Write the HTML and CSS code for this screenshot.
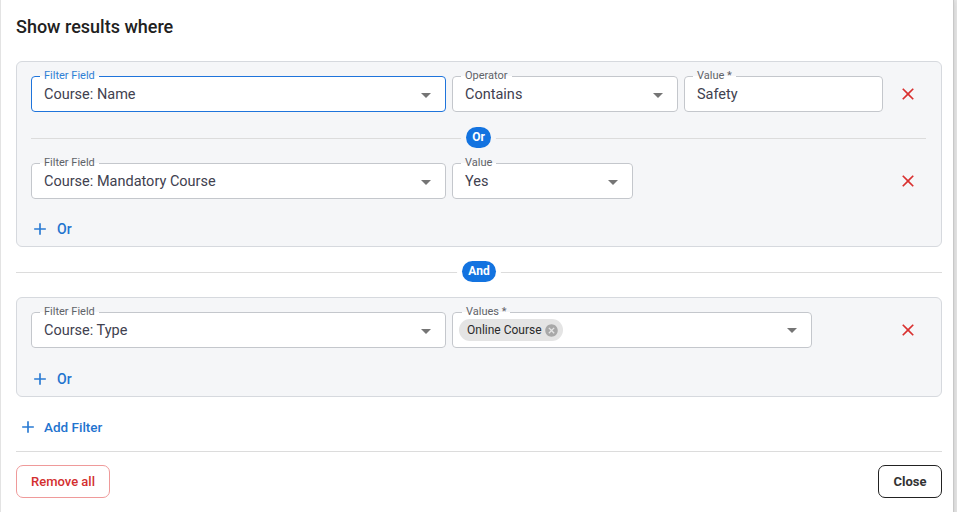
FILE: index.html
```html
<!DOCTYPE html>
<html lang="en">

<head>
    <meta charset="UTF-8">
    <meta name="viewport" content="width=device-width, initial-scale=1.0">
    <title>Show results where</title>
    <link rel="stylesheet" href="styles.css">
</head>

<body>
    <div class="dialog">
        <h2 class="title">Show results where</h2>

        <div class="group">
            <div class="row">
                <fieldset class="field focused w-field">
                    <legend>Filter Field</legend>
                    <div class="field-body">
                        <span class="val">Course: Name</span>
                        <svg class="arrow" viewBox="0 0 24 24"><path d="M7 10l5 5 5-5z" /></svg>
                    </div>
                </fieldset>
                <fieldset class="field w-op">
                    <legend>Operator</legend>
                    <div class="field-body">
                        <span class="val">Contains</span>
                        <svg class="arrow" viewBox="0 0 24 24"><path d="M7 10l5 5 5-5z" /></svg>
                    </div>
                </fieldset>
                <fieldset class="field w-value">
                    <legend>Value *</legend>
                    <div class="field-body">
                        <span class="val">Safety</span>
                    </div>
                </fieldset>
                <button class="remove">
                    <svg viewBox="0 0 24 24"><path d="M19 6.41 17.59 5 12 10.59 6.41 5 5 6.41 10.59 12 5 17.59 6.41 19 12 13.41 17.59 19 19 17.59 13.41 12z" /></svg>
                </button>
            </div>

            <div class="divider inner"><span class="pill">Or</span></div>

            <div class="row">
                <fieldset class="field w-field">
                    <legend>Filter Field</legend>
                    <div class="field-body">
                        <span class="val">Course: Mandatory Course</span>
                        <svg class="arrow" viewBox="0 0 24 24"><path d="M7 10l5 5 5-5z" /></svg>
                    </div>
                </fieldset>
                <fieldset class="field w-yes">
                    <legend>Value</legend>
                    <div class="field-body">
                        <span class="val">Yes</span>
                        <svg class="arrow" viewBox="0 0 24 24"><path d="M7 10l5 5 5-5z" /></svg>
                    </div>
                </fieldset>
                <button class="remove">
                    <svg viewBox="0 0 24 24"><path d="M19 6.41 17.59 5 12 10.59 6.41 5 5 6.41 10.59 12 5 17.59 6.41 19 12 13.41 17.59 19 19 17.59 13.41 12z" /></svg>
                </button>
            </div>

            <button class="link or-btn">
                <svg viewBox="0 0 24 24"><path d="M19 13h-6v6h-2v-6H5v-2h6V5h2v6h6v2z" /></svg>
                Or
            </button>
        </div>

        <div class="divider outer"><span class="pill">And</span></div>

        <div class="group second">
            <div class="row">
                <fieldset class="field w-field">
                    <legend>Filter Field</legend>
                    <div class="field-body">
                        <span class="val">Course: Type</span>
                        <svg class="arrow" viewBox="0 0 24 24"><path d="M7 10l5 5 5-5z" /></svg>
                    </div>
                </fieldset>
                <fieldset class="field chips w-values">
                    <legend>Values *</legend>
                    <div class="field-body">
                        <span class="chip">Online Course
                            <svg viewBox="0 0 24 24"><path d="M12 2C6.470 2 2 6.47 2 12s4.47 10 10 10 10-4.47 10-10S17.53 2 12 2zm5 13.59L15.59 17 12 13.41 8.41 17 7 15.59 10.59 12 7 8.41 8.41 7 12 10.59 15.59 7 17 8.41 13.41 12 17 15.59z" /></svg>
                        </span>
                        <span class="val"></span>
                        <svg class="arrow" viewBox="0 0 24 24"><path d="M7 10l5 5 5-5z" /></svg>
                    </div>
                </fieldset>
                <button class="remove">
                    <svg viewBox="0 0 24 24"><path d="M19 6.41 17.59 5 12 10.59 6.41 5 5 6.41 10.59 12 5 17.59 6.41 19 12 13.41 17.59 19 19 17.59 13.41 12z" /></svg>
                </button>
            </div>

            <button class="link or-btn">
                <svg viewBox="0 0 24 24"><path d="M19 13h-6v6h-2v-6H5v-2h6V5h2v6h6v2z" /></svg>
                Or
            </button>
        </div>

        <button class="link add-btn">
            <svg viewBox="0 0 24 24"><path d="M19 13h-6v6h-2v-6H5v-2h6V5h2v6h6v2z" /></svg>
            Add Filter
        </button>

        <div class="footer">
            <button class="btn danger">Remove all</button>
            <button class="btn dark">Close</button>
        </div>
    </div>
</body>

</html>
```

FILE: styles.css
```css
body {
    margin: 0;
    background: #e8e8e8;
    font-family: Roboto, "Noto Sans", sans-serif;
    overflow: hidden;
}

.dialog {
    width: 926px;
    height: 560px;
    padding: 15px 11px 0 15px;
    background: #fff;
    border-left: 1px solid #e3e3e3;
    border-right: 1px solid #c8c8c8;
    box-shadow: 0 0 6px rgba(0, 0, 0, .15);
}

.title {
    margin: 0 0 22px;
    font-size: 18px;
    line-height: 24px;
    font-weight: 500;
    color: #212121;
}

.group {
    background: #f5f6f8;
    border: 1px solid #d6d9de;
    border-radius: 6px;
    padding: 8px 15px 2px 14px;
}

.row {
    display: flex;
    gap: 6px;
    align-items: flex-end;
}

/* outlined inputs */
.field {
    margin: 0;
    min-width: 0;
    box-sizing: border-box;
    padding: 4px 7px 7px 12px;
    border: 1px solid #c4c7cc;
    border-radius: 4px;
    background: #fff;
}

.field legend {
    font-size: 11px;
    line-height: 12px;
    padding: 0 4px;
    margin-left: -4px;
    color: #5f6368;
}

.field.focused {
    border-color: #1f74db;
}

.field.focused legend {
    color: #2f7fd5;
}

.field-body {
    display: flex;
    align-items: center;
    height: 18px;
}

.val {
    flex: 1;
    font-size: 14.5px;
    line-height: 18px;
    color: #41414f;
    white-space: nowrap;
}

.arrow {
    width: 24px;
    height: 24px;
    fill: #757575;
}

.w-field { width: 415px; }
.w-op { width: 226px; }
.w-value { width: 199px; }
.w-yes { width: 181px; }
.w-values { width: 360px; }

.field.chips {
    padding: 1px 7px 6px 6px;
}

.field.chips legend {
    margin-left: 3px;
}

.field.chips .field-body {
    height: 22px;
}

.chip {
    display: flex;
    align-items: center;
    gap: 2px;
    height: 22px;
    padding: 0 4px 0 8px;
    border-radius: 11px;
    background: #e4e4e4;
    font-size: 12px;
    color: #2a2a2a;
}

.chip svg {
    width: 15px;
    height: 15px;
    fill: #a8a8a8;
}

.remove {
    margin-left: auto;
    width: 36px;
    height: 36px;
    padding: 0;
    border: none;
    background: transparent;
    display: flex;
    align-items: center;
    justify-content: center;
}

.remove svg {
    width: 20px;
    height: 20px;
    fill: #d9302f;
}

/* Or / And dividers */
.divider {
    display: flex;
    align-items: center;
    justify-content: center;
    position: relative;
}

.divider::before {
    content: "";
    position: absolute;
    left: 0;
    right: 0;
    top: 50%;
    border-top: 1px solid #dcdcdc;
}

.divider.inner {
    margin: 15px 0 9px;
}

.divider.outer {
    margin: 14px 0 15px;
}

.pill {
    position: relative;
    height: 21px;
    line-height: 21px;
    padding: 0 6px;
    border-radius: 11px;
    background: #1373e0;
    color: #fff;
    font-size: 12px;
    font-weight: 700;
    box-shadow: 0 0 0 5px #fff;
}

.inner .pill {
    box-shadow: 0 0 0 5px #f5f6f8;
}

.link {
    display: flex;
    align-items: center;
    gap: 7px;
    height: 30px;
    border: none;
    background: transparent;
    font-family: inherit;
    font-size: 14px;
    font-weight: 500;
    color: #1f74cf;
    padding: 0 6px 0 0;
}

.link svg {
    width: 20px;
    height: 20px;
    fill: #2a7bd3;
}

.or-btn {
    margin: 15px 0 0 -1px;
}

.second .or-btn {
    margin-top: 16px;
}

.add-btn {
    margin: 15px 0 0 2px;
    gap: 6px;
    font-size: 13.5px;
}

.footer {
    margin-top: 9px;
    padding-top: 13px;
    border-top: 1px solid #dcdcdc;
    display: flex;
    justify-content: space-between;
}

.btn {
    height: 33px;
    border-radius: 7px;
    background: #fff;
    font-family: inherit;
    font-size: 13px;
}

.btn.danger {
    width: 94px;
    border: 1px solid #ef9a9a;
    color: #d32f2f;
    font-weight: 500;
}

.btn.dark {
    width: 64px;
    border: 1px solid #222;
    color: #333;
    font-weight: 700;
}
```
